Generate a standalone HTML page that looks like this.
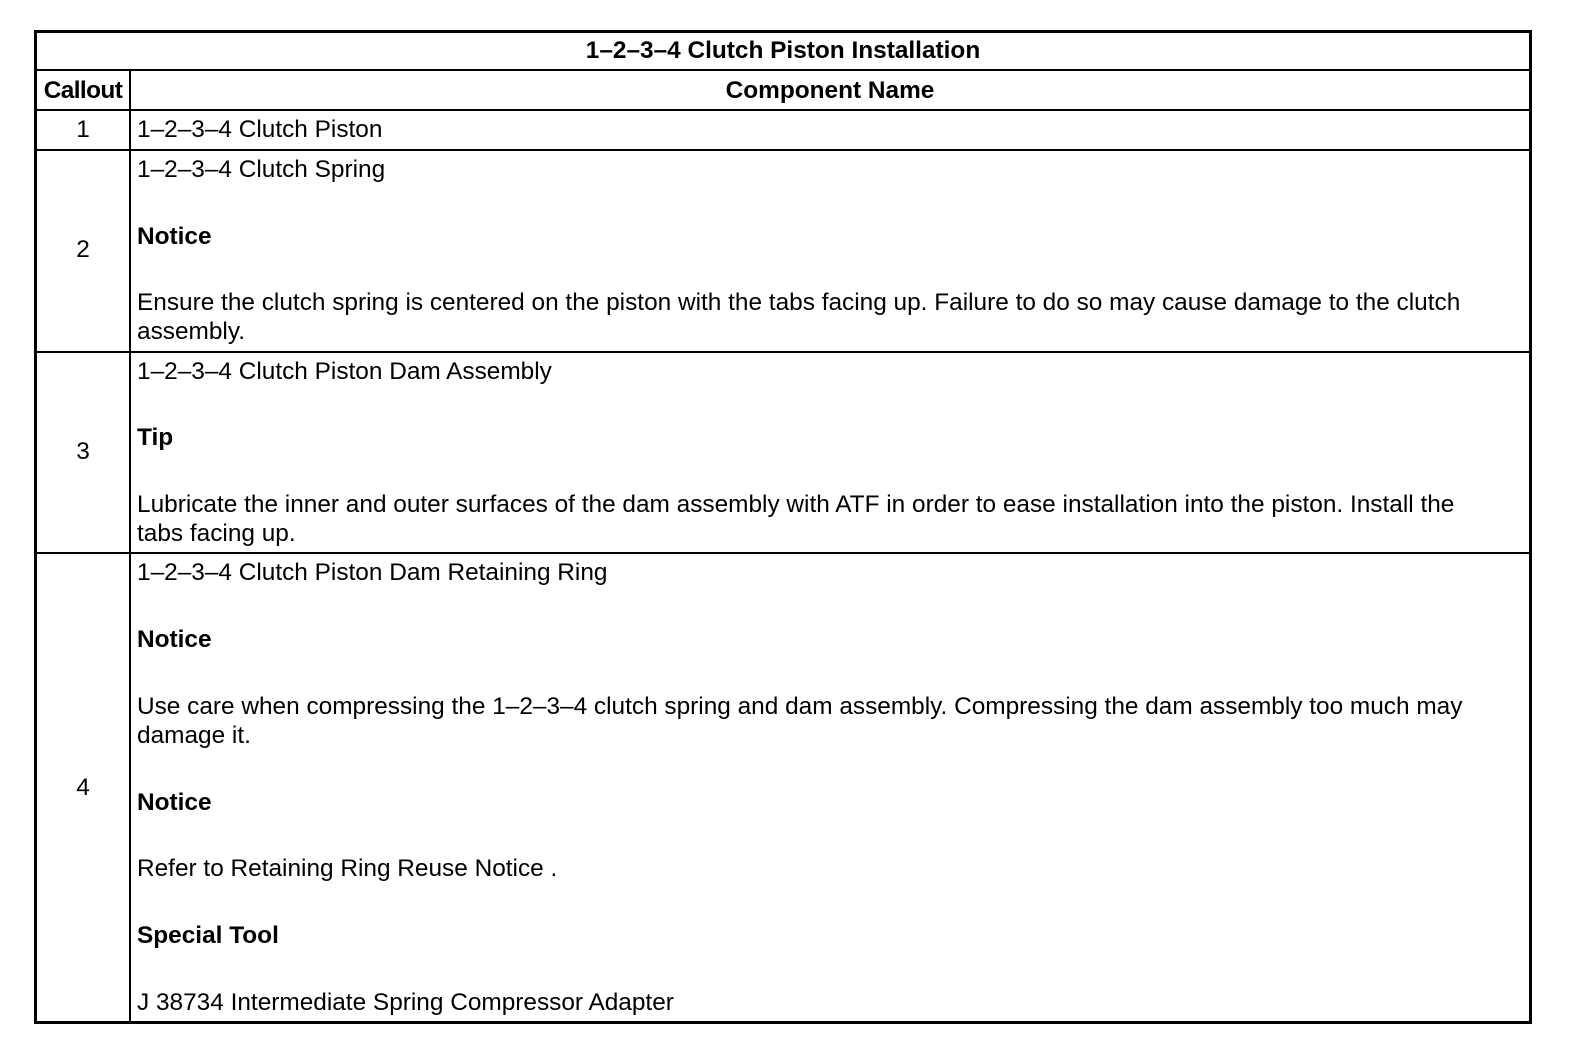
<!DOCTYPE html><html><head><style>
body{margin:0;width:1584px;height:1060px;background:#fff;position:relative;font-family:"Liberation Sans",Arial,sans-serif;font-size:24.4px;color:#000;overflow:hidden}
.l{position:absolute;background:#000}
.t{position:absolute;line-height:30px;white-space:nowrap}
b{font-weight:bold}
</style></head><body>
<div class="l" style="left:34px;top:30px;width:1498px;height:3px"></div>
<div class="l" style="left:34px;top:1021px;width:1498px;height:3px"></div>
<div class="l" style="left:34px;top:30px;width:3px;height:994px"></div>
<div class="l" style="left:1529px;top:30px;width:3px;height:994px"></div>
<div class="l" style="left:129px;top:70px;width:2px;height:952px"></div>
<div class="l" style="left:34px;top:69px;width:1498px;height:2px"></div>
<div class="l" style="left:34px;top:109px;width:1498px;height:2px"></div>
<div class="l" style="left:34px;top:149px;width:1498px;height:2px"></div>
<div class="l" style="left:34px;top:351px;width:1498px;height:2px"></div>
<div class="l" style="left:34px;top:552px;width:1498px;height:2px"></div>

<div class="t" style="left:34px;width:1498px;text-align:center;top:36px"><b>1–2–3–4 Clutch Piston Installation</b></div>
<div class="t" style="left:37px;width:92px;text-align:center;top:76px;letter-spacing:-0.6px"><b>Callout</b></div>
<div class="t" style="left:131px;width:1398px;text-align:center;top:76px"><b>Component Name</b></div>

<div class="t" style="left:37px;width:92px;text-align:center;top:115px">1</div>
<div class="t" style="left:137px;top:115px">1–2–3–4 Clutch Piston</div>

<div class="t" style="left:37px;width:92px;text-align:center;top:235px">2</div>
<div class="t" style="left:137px;top:155px">1–2–3–4 Clutch Spring</div>
<div class="t" style="left:137px;top:222px"><b>Notice</b></div>
<div class="t" style="left:137px;top:288px">Ensure the clutch spring is centered on the piston with the tabs facing up. Failure to do so may cause damage to the clutch</div>
<div class="t" style="left:137px;top:317px">assembly.</div>

<div class="t" style="left:37px;width:92px;text-align:center;top:437px">3</div>
<div class="t" style="left:137px;top:357px">1–2–3–4 Clutch Piston Dam Assembly</div>
<div class="t" style="left:137px;top:423px"><b>Tip</b></div>
<div class="t" style="left:137px;top:490px">Lubricate the inner and outer surfaces of the dam assembly with ATF in order to ease installation into the piston. Install the</div>
<div class="t" style="left:137px;top:519px">tabs facing up.</div>

<div class="t" style="left:37px;width:92px;text-align:center;top:773px">4</div>
<div class="t" style="left:137px;top:558px">1–2–3–4 Clutch Piston Dam Retaining Ring</div>
<div class="t" style="left:137px;top:625px"><b>Notice</b></div>
<div class="t" style="left:137px;top:692px">Use care when compressing the 1–2–3–4 clutch spring and dam assembly. Compressing the dam assembly too much may</div>
<div class="t" style="left:137px;top:721px">damage it.</div>
<div class="t" style="left:137px;top:788px"><b>Notice</b></div>
<div class="t" style="left:137px;top:854px">Refer to Retaining Ring Reuse Notice .</div>
<div class="t" style="left:137px;top:921px"><b>Special Tool</b></div>
<div class="t" style="left:137px;top:988px">J 38734 Intermediate Spring Compressor Adapter</div>
</body></html>
